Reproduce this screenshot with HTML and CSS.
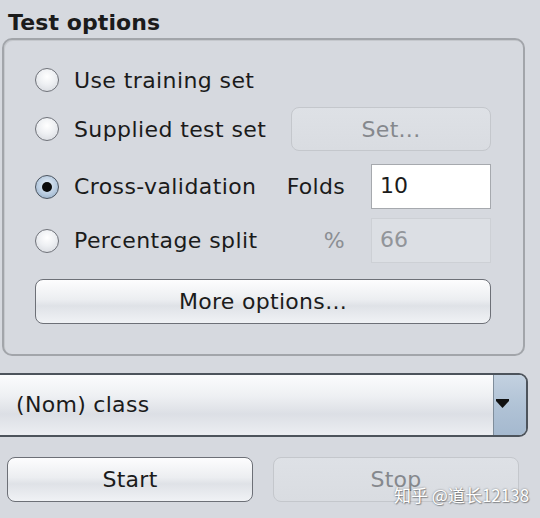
FILE: index.html
```html
<!DOCTYPE html>
<html>
<head>
<meta charset="utf-8">
<link rel="stylesheet" href="styles.css">
</head>
<body>
<div class="app">
  <div class="title">Test options</div>
  <div class="panel">
    <div class="grid">
      <label class="radio r1"><span class="dot"></span>Use training set</label>
      <label class="radio r2"><span class="dot"></span>Supplied test set</label>
      <button class="btn disabled set r2">Set...</button>
      <label class="radio r3"><span class="dot on"></span>Cross-validation</label>
      <span class="side r3">Folds</span>
      <div class="field r3">10</div>
      <label class="radio r4"><span class="dot"></span>Percentage split</label>
      <span class="side r4 dim">%</span>
      <div class="field off r4">66</div>
      <button class="btn more r5">More options...</button>
    </div>
  </div>
  <div class="combo">
    <span class="combo-text">(Nom) class</span>
    <span class="combo-arrow"><svg width="13" height="10" viewBox="0 0 13 10"><rect x="0" y="0" width="13" height="2" fill="#111"/><path d="M0 2 H13 L6.5 9 Z" fill="#111"/></svg></span>
  </div>
  <div class="actions">
    <button class="btn act">Start</button>
    <button class="btn act disabled">Stop</button>
  </div>
  <div class="mark">知乎 @道长12138</div>
</div>
</body>
</html>
```
FILE: styles.css
```css
* { box-sizing: border-box; }
html, body { margin: 0; padding: 0; }
body {
  background: #d6d9df;
  font-family: "DejaVu Sans", "Noto Sans CJK SC", sans-serif;
  color: #1b1b1b;
  width: 540px;
  height: 518px;
  overflow: hidden;
}
.app { position: relative; width: 540px; height: 518px; }
.title {
  font-weight: bold;
  font-size: 22px;
  height: 38px;
  line-height: 24px;
  padding: 11px 0 0 8px;
  letter-spacing: 0.1px;
}
.panel {
  margin: 0 15px 0 2px;
  height: 318px;
  border: 2px solid #a2a5aa;
  border-radius: 10px;
  box-shadow: inset 1px 1px 0 #c5c8cd;
  padding: 18px 32px 0 31px;
}
.grid {
  display: grid;
  grid-template-columns: minmax(0, 1fr) 54px 120px;
  grid-template-rows: 44px 49px 58px 54px 61px;
  column-gap: 26px;
}
.r1 { grid-row: 1; }
.r2 { grid-row: 2; margin-top: 5px; }
.r3 { grid-row: 3; margin-top: 13px; }
.r4 { grid-row: 4; margin-top: 9px; }
.r5 { grid-row: 5; margin-top: 16px; }
.radio {
  grid-column: 1;
  display: flex;
  align-items: center;
  height: 44px;
  font-size: 22px;
  letter-spacing: 0.4px;
  gap: 15px;
  align-self: start;
  white-space: nowrap;
}
.r3.radio, .r4.radio { height: 45px; }
.dot {
  width: 24px;
  height: 24px;
  border-radius: 50%;
  border: 1.5px solid #6f7279;
  background: radial-gradient(circle at 50% 35%, #ffffff 0%, #eef0f3 45%, #d3d6dc 100%);
  flex: none;
  display: flex;
  align-items: center;
  justify-content: center;
}
.dot.on {
  border-color: #4c5560;
  background: radial-gradient(circle at 50% 40%, #e8f0f8 0%, #b9cce0 55%, #8aa3bd 100%);
}
.dot.on::after {
  content: "";
  width: 10px;
  height: 10px;
  border-radius: 50%;
  background: #0b0b0b;
}
.btn {
  font-family: "DejaVu Sans", sans-serif;
  font-size: 22px;
  letter-spacing: 0.3px;
  color: #1b1b1b;
  border: 1.5px solid #6d7077;
  border-radius: 8px;
  background: linear-gradient(#fdfdfe 0%, #eceef1 45%, #dfe2e7 60%, #f0f2f5 100%);
  height: 45px;
  padding: 0;
  align-self: start;
}
.btn.disabled {
  color: #85888d;
  border-color: #c4c7cc;
  background: linear-gradient(#dee1e6, #d9dce1);
}
.set { grid-column: 2 / 4; height: 44px; }
.more { grid-column: 1 / 4; }
.side {
  grid-column: 2;
  font-size: 22px;
  letter-spacing: 0.3px;
  justify-self: end;
  align-self: start;
  height: 45px;
  line-height: 45px;
  white-space: nowrap;
}
.side.dim { color: #8b8e93; }
.field {
  grid-column: 3;
  height: 45px;
  align-self: start;
  border: 1.5px solid #a6a9ae;
  background: #ffffff;
  font-size: 22px;
  line-height: 42px;
  padding-left: 8px;
}
.field.off {
  background: #dcdfe4;
  border-color: #cdd0d5;
  color: #92959a;
}
.combo {
  margin-top: 17px;
  height: 64px;
  width: 528px;
  display: flex;
  border: 2px solid #4d545c;
  border-left: none;
  border-radius: 0 9px 9px 0;
  overflow: hidden;
  background: linear-gradient(#fbfcfd 0%, #eef0f3 35%, #dcdfe5 65%, #eceef2 100%);
}
.combo-text {
  flex: 1;
  font-size: 22px;
  letter-spacing: 0.3px;
  line-height: 60px;
  padding-left: 16px;
}
.combo-arrow {
  width: 33px;
  border-left: 1.5px solid #7f8d9b;
  background: linear-gradient(#c3d1e0 0%, #b1c3d6 50%, #a5b9cf 100%);
  display: flex;
  align-items: center;
  padding-left: 2px;
  padding-bottom: 2px;
}
.actions {
  display: flex;
  gap: 20px;
  padding: 20px 21px 0 7px;
}
.act { flex: 1; height: 45px; }
.mark {
  position: absolute;
  left: 394px;
  top: 482px;
  font-family: "Noto Sans CJK SC", "DejaVu Sans", sans-serif;
  font-size: 17px;
  color: #ffffff;
  text-shadow: 0 0 2px rgba(0,0,0,0.45), 1px 1px 1px rgba(0,0,0,0.3);
  white-space: nowrap;
}
```
